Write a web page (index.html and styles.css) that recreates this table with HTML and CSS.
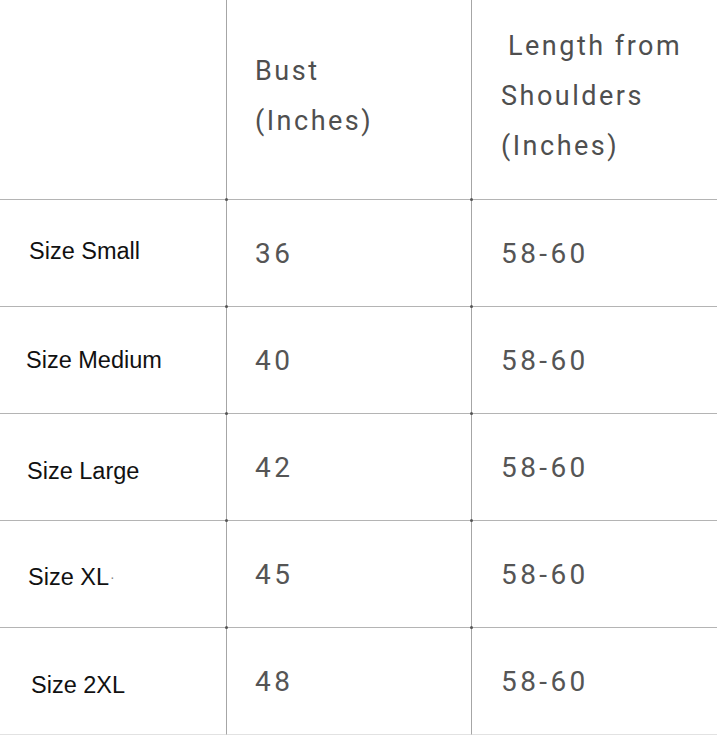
FILE: index.html
```html
<!DOCTYPE html>
<html lang="en">
<head>
<meta charset="utf-8">
<title>Size Chart</title>
<link rel="stylesheet" href="styles.css">
</head>
<body>
<div class="chart">
  <div class="cell head first"></div>
  <div class="cell head mid"><div class="htext bust">Bust<br>(Inches)</div></div>
  <div class="cell head last"><div class="htext"><span class="ind">Length from</span><br>Shoulders<br>(Inches)</div></div>

  <div class="cell label first">Size Small</div>
  <div class="cell num mid">36</div>
  <div class="cell num last">58-60</div>

  <div class="cell label first l-md">Size Medium</div>
  <div class="cell num mid">40</div>
  <div class="cell num last">58-60</div>

  <div class="cell label first l-lg">Size Large</div>
  <div class="cell num mid">42</div>
  <div class="cell num last">58-60</div>

  <div class="cell label first l-xl">Size XL<span class="dot">·</span></div>
  <div class="cell num mid">45</div>
  <div class="cell num last">58-60</div>

  <div class="cell label first l-2xl bottom">Size 2XL</div>
  <div class="cell num mid bottom">48</div>
  <div class="cell num last bottom">58-60</div>
</div>
</body>
</html>
```

FILE: styles.css
```css
html, body {
  margin: 0;
  padding: 0;
  background: #ffffff;
}

.chart {
  display: grid;
  grid-template-columns: 227px 245px 1fr;
  grid-template-rows: 200px repeat(5, 107px);
  width: 717px;
}

.cell {
  position: relative;
  box-sizing: border-box;
  display: flex;
  align-items: center;
  border-bottom: 1px solid #b4b4b4;
}

.first, .mid {
  border-right: 1px solid #a6a6a6;
}

/* small junction dots where lines cross */
.first:not(.bottom)::after, .mid:not(.bottom)::after {
  content: "";
  position: absolute;
  right: -2px;
  bottom: -2px;
  width: 3px;
  height: 3px;
  border-radius: 50%;
  background: #555555;
  z-index: 1;
}

.head.first, .head.mid {
  border-right-color: #a6a6a6;
}

.bottom {
  border-bottom-color: #e2e2e2;
}

.head {
  padding-bottom: 8px;
}

.htext {
  font-family: Roboto, "Liberation Sans", sans-serif;
  font-size: 27px;
  line-height: 50px;
  letter-spacing: 2.5px;
  color: #4f4f4f;
}

.mid .htext { padding-left: 28px; }
.last .htext { padding-left: 29px; }
.ind { padding-left: 7px; }

.num {
  font-family: Roboto, "Liberation Sans", sans-serif;
  font-size: 28px;
  letter-spacing: 3.4px;
  color: #555555;
}
.num.mid { padding-left: 28px; }
.num.last { padding-left: 29px; }

.label {
  font-family: "Liberation Sans", Arial, sans-serif;
  font-size: 23.5px;
  color: #111111;
  padding-left: 29px;
  padding-bottom: 4px;
}
.l-md { padding-left: 26px; padding-bottom: 0; }
.l-lg { padding-left: 27px; padding-top: 8px; padding-bottom: 0; }
.l-xl { padding-left: 28px; padding-top: 6px; padding-bottom: 0; }
.l-2xl { padding-left: 31px; padding-top: 8px; padding-bottom: 0; }

.dot {
  color: #888888;
  font-size: 14px;
  margin-left: 1px;
}
```
